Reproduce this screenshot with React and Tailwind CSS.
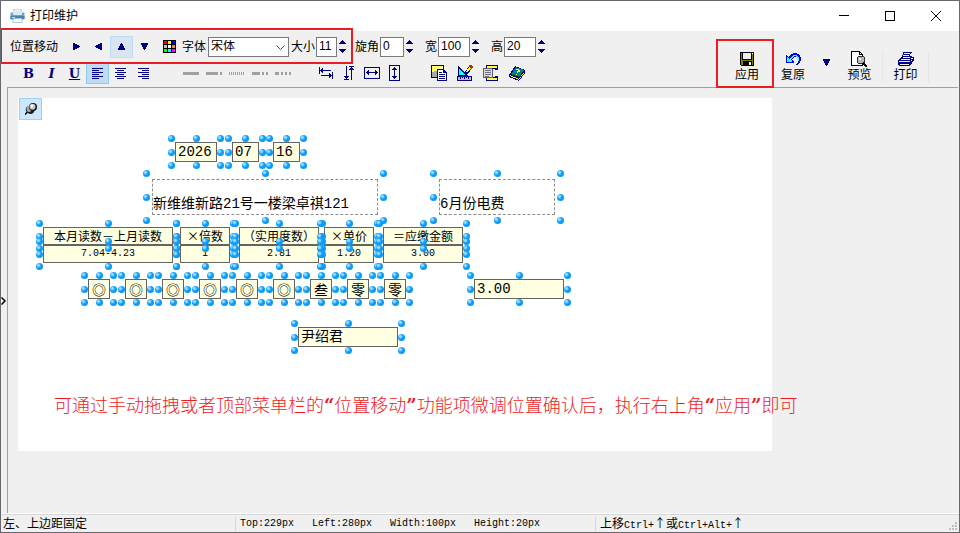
import React from "react";

const CJK = "font-['Liberation_Sans','Noto_Sans_CJK_SC',sans-serif]";

/* ---------- icons ---------- */

function Svg({ w, h, children }) {
  return (
    <svg
      width={w}
      height={h}
      viewBox={`0 0 ${w} ${h}`}
      fill="none"
      shapeRendering="crispEdges"
      aria-hidden="true"
      className="shrink-0"
    >
      {children}
    </svg>
  );
}

const TRI = {
  right: "M1 0H2L8 3V4L2 7H1Z",
  left: "M7 0H6L0 3V4L6 7H7Z",
  up: "M0 7V6L3 0H4L7 6V7Z",
  down: "M0 0V1L3 7H4L7 1V0Z",
};

function Tri({ dir }) {
  return (
    <Svg w={8} h={8}>
      <path d={TRI[dir]} fill="#000080" />
    </Svg>
  );
}

function PrinterColor() {
  return (
    <svg width="15" height="14" viewBox="0 0 15 14" aria-hidden="true">
      <path d="M4 0h7l1 5H3z" fill="#eef6fb" stroke="#9db9c9" strokeWidth=".8" />
      <path d="M0.5 4.5q0-1 1-1h12q1 0 1 1v6h-14z" fill="#6fa3c2" />
      <path d="M3 2h9v4H3z" fill="#d9ecf6" />
      <path d="M0.5 7h14v3h-14z" fill="#4a84a8" />
      <path d="M2 8h3v1H2z" fill="#b6e3f7" />
      <path d="M3.5 9.5h8l1 4h-10z" fill="#f4f9fc" stroke="#a9bcc7" strokeWidth=".8" />
    </svg>
  );
}

function Palette() {
  const colors = ["#f00", "#ff0", "#00f", "#c0c0c0", "#fff", "#ff8040", "#0f0", "#0ff", "#f0f"];
  return (
    <Svg w={13} h={13}>
      <rect width="13" height="13" fill="#000" />
      {colors.map((c, i) => (
        <rect key={c} x={1 + (i % 3) * 4} y={1 + Math.floor(i / 3) * 4} width="3" height="3" fill={c} />
      ))}
    </Svg>
  );
}

function AlignLines({ kind }) {
  const widths = [11, 7, 11, 7, 11, 7];
  return (
    <Svg w={11} h={11}>
      {widths.map((w, i) => {
        const x = kind === "left" ? 0 : kind === "center" ? (11 - w) / 2 : 11 - w;
        return <rect key={i} x={x} y={i * 2} width={w} height="1" fill="#000080" />;
      })}
    </Svg>
  );
}

const DASHES = [
  { name: "实线", parts: [[0, 16]] },
  { name: "长虚线", parts: [[0, 12], [14, 2]] },
  { name: "点线", parts: [[0, 1], [2, 1], [4, 1], [6, 1], [8, 1], [10, 1], [12, 1], [14, 1]] },
  { name: "点划线", parts: [[0, 8], [10, 2], [14, 2]] },
  { name: "双点划线", parts: [[0, 4], [6, 2], [10, 2], [14, 2]] },
];

function Dash({ parts }) {
  return (
    <Svg w={16} h={3}>
      {parts.map(([x, w]) => (
        <rect key={x} x={x} y="0" width={w} height="3" fill="#a0a0a0" />
      ))}
    </Svg>
  );
}

const N = "#000080";

function SpaceH() {
  return (
    <Svg w={14} h={12}>
      <path
        fill={N}
        d="M0 0h1v7H0zM1 3h11v1H1zM2 2h1v3H2zM3 1h1v5H3zM13 5h1v7h-1zM2 8h11v1H2zM11 7h1v3h-1zM10 6h1v5h-1z"
      />
    </Svg>
  );
}
function SpaceV() {
  return (
    <Svg w={10} h={14}>
      <path
        fill={N}
        d="M2 0h1v13H2zM0 13h5v1H0zM0 10h5v1H0zM1 11h3v1H1zM7 1h1v13H7zM5 0h5v1H5zM5 3h5v1H5zM6 2h3v1H6z"
      />
    </Svg>
  );
}
function WidthBox() {
  return (
    <Svg w={16} h={12}>
      <path d="M.5 .5h15v11H.5z" stroke={N} />
      <path fill={N} d="M2 5h12v1H2zM3 4h1v3H3zM4 3h1v5H4zM12 4h1v3h-1zM11 3h1v5h-1z" />
    </Svg>
  );
}
function HeightBox() {
  return (
    <Svg w={11} h={16}>
      <path d="M.5 .5h10v15H.5z" stroke={N} />
      <path fill={N} d="M5 2h1v12H5zM4 3h3v1H4zM3 4h5v1H3zM4 12h3v1H4zM3 11h5v1H3z" />
    </Svg>
  );
}
function PictureCopy() {
  return (
    <Svg w={16} h={16}>
      <path d="M0 0h13v13H0z" fill={N} />
      <path d="M1 1h11v6H1z" fill="#ffff60" />
      <path d="M8 2h3v2H8z" fill="#fff" />
      <path d="M1 7h2V6h3v1h2v5H1z" fill="#a8a8a8" />
      <path d="M6 4h7v1h1v1h1v1h1v9H6z" fill={N} />
      <path d="M7 5h5v3h3v7H7z" fill="#fff" />
      <path d="M8 7h3v1H8zM8 9h6v1H8zM8 11h6v1H8zM8 13h6v1H8z" fill={N} />
    </Svg>
  );
}
function SetSquare() {
  return (
    <Svg w={16} h={16}>
      <path d="M1 0l10 11H1z" fill={N} />
      <path d="M2 3l6 7H2z" fill="#00ffff" />
      <path d="M4 7l2 2H4z" fill="#f0f0f0" />
      <path d="M8 9V7l4-6 3 2-4 6-3 1z" fill={N} />
      <path d="M9 7l3-5 2 1-4 5z" fill="#ffff00" />
      <path d="M12 0h2l2 2v1l-2 1-2-2z" fill="#a03818" />
      <path d="M0 11h15v5H0z" fill={N} />
      <path d="M1 12h13v3H1z" fill="#c0c0c0" />
      <path d="M3 12h1v2H3zM5 12h1v1H5zM7 12h1v2H7zM9 12h1v1H9zM11 12h1v2h-1z" fill={N} />
    </Svg>
  );
}
function Clips() {
  return (
    <Svg w={16} h={16}>
      <path d="M3 0h12v5h-3V4H6v2H3zM3 16h12v-5h-3v1H6v-2H3z" fill={N} />
      <path d="M4 1h10v2H4zM4 13h10v2H4z" fill="#ffff40" />
      <path d="M0 3h9v1h1v9H0z" fill="#606070" />
      <path d="M1 4h8v8H1z" fill="#dcdcdc" />
      <path d="M2 5h6v1H2zM2 7h6v1H2zM2 9h6v1H2zM2 11h4v1H2z" fill="#707080" />
    </Svg>
  );
}
function Book() {
  return (
    <Svg w={16} h={15}>
      <path d="M0 9l6-9 10 4v3l-6 8-10-4z" fill={N} />
      <path d="M2 8l5-7 8 3-5 7z" fill="#008080" />
      <path d="M1 9l9 4 5-7v1l-5 7-9-4z" fill="#ffff00" />
      <path d="M7 3h3v1h1v2H9v1H8V5h1V4H7zM7 8h1v1H7z" fill="#ffff40" />
    </Svg>
  );
}
function Floppy() {
  return (
    <Svg w={14} h={14}>
      <path d="M0 0h14v14H1L0 13z" fill="#000" />
      <path d="M1 1h12v12H1z" fill="#808000" />
      <path d="M2 0h10v8H2z" fill="#000" />
      <path d="M3 1h8v6H3z" fill="#f0f0f0" />
      <path d="M3 9h9v5H3z" fill="#000" />
      <path d="M9 10h2v3H9z" fill="#f0f0f0" />
      <path d="M12 1h1v1h-1z" fill="#fff" />
    </Svg>
  );
}
function Undo() {
  return (
    <Svg w={15} h={12}>
      <path d="M0 2h1v1h1v1h1V3h1V2h1V1h2V0h4v1h2v1h1v2h1v4h-1v2h-1v1h-1v1h-2v-1h1v-1h1V8h1V6h-1V5h-1V4H8v1H7v1H6v1h1v1h1v2H0z" fill="#0000e0" />
      <path d="M1 4h1v1h1v1h1V5h1V4h1V3h1V2h4v1h1v1h1v4h-1V5h-1V4h-1V3H8v1H7v1H6v1H5v1h1v2H1z" fill="#40f0ff" />
    </Svg>
  );
}
function Preview() {
  return (
    <Svg w={17} h={16}>
      <path d="M.5 .5h8l3 3v11H.5z" fill="#fff" stroke="#000" />
      <path d="M8.500 .5v3h3" stroke="#000" />
      <circle cx="10" cy="9" r="4" fill="#b8b8b8" stroke="#303030" />
      <path d="M8 7h2v2H8z" fill="#e8e8e8" />
      <path d="M12 12l4 4" stroke="#000" strokeWidth="2" />
    </Svg>
  );
}
function PrinterLine() {
  return (
    <Svg w={16} h={14}>
      <path
        fill={N}
        d="M5 0h9v1h-1v1h-1v2h2v1h2v4h-1v1h-1v2h-1v1h-1v1H1v-1H0V8h1V7h1V6h1V5h1V3h1z"
      />
      <path
        fill="#f0f0f0"
        d="M6 1h6v1H6zM5 3h6v1H5zM5 5h7v1H4zM3 7h9v1H3zM1 9h11v1H1zM2 12h9v1H2zM13 6h2v1h-2zM13 8h1v1h-1z"
      />
    </Svg>
  );
}
function Pin() {
  return (
    <svg width="12" height="12" viewBox="0 0 12 12" aria-hidden="true">
      <path d="M0 11.500l3-3" stroke="#000" strokeWidth="1.500" />
      <ellipse cx="5" cy="7" rx="4.500" ry="3.800" fill="#202020" transform="rotate(35 5 7)" />
      <ellipse cx="4" cy="6" rx="2.500" ry="3" fill="#a8a8a8" />
      <circle cx="8" cy="4" r="4" fill="#111" />
      <circle cx="7.500" cy="3.700" r="3" fill="#c8c8c8" />
      <circle cx="7" cy="3" r="1.500" fill="#fff" />
    </svg>
  );
}

/* ---------- toolbar parts ---------- */

function Tool({ label, active, hover, wide, children }) {
  const state = active
    ? "border-[#90c8f6] bg-[#c0dcf3]"
    : hover
      ? "border-[#c0dcf3] bg-[#d8e6f1]"
      : "border-transparent";
  return (
    <button
      type="button"
      aria-label={label}
      title={label}
      className={`flex h-[22px] shrink-0 items-center justify-center border ${wide ? "w-[26px]" : "w-[23px]"} ${state}`}
    >
      {children}
    </button>
  );
}

function NumberField({ id, label, value, width }) {
  return (
    <div className="flex shrink-0 items-center">
      <label htmlFor={id} className="pr-px">{label}</label>
      <input
        id={id}
        defaultValue={value}
        className={`h-5 border border-[#7a7a7a] bg-white pb-px pl-0.5 text-xs leading-none outline-none ${width}`}
      />
      <div className="ml-0.5 flex flex-col gap-1">
        <button type="button" aria-label={`${label}加`} className="block">
          <Svg w={8} h={5}>
            <path d="M0 4h7L4 0H3z" fill={N} />
          </Svg>
        </button>
        <button type="button" aria-label={`${label}减`} className="block">
          <Svg w={8} h={5}>
            <path d="M0 0h7L4 4H3z" fill={N} />
          </Svg>
        </button>
      </div>
    </div>
  );
}

function BigTool({ label, icon, divided, marked }) {
  return (
    <button
      type="button"
      className={`relative flex h-8 w-[46px] flex-col items-center justify-between ${divided ? "border-r border-[#e6e6e6]" : ""}`}
    >
      <span className="flex h-4 items-center">{icon}</span>
      <span className="leading-4">{label}</span>
      {marked && <span className="pointer-events-none absolute -top-3 -right-1 -bottom-[5px] -left-2 border-2 border-[#ed1c24]" />}
    </button>
  );
}

/* ---------- design surface ---------- */

const DIGITS = [
  [70, "◎"], [107, "◎"], [144, "◎"], [181, "◎"], [218, "◎"],
  [255, "◎"], [292, "叁"], [329, "零"], [366, "零"],
];

const ITEMS = [
  { x: 157, y: 44, w: 42, h: 20, text: "2026" },
  { x: 214, y: 44, w: 27, h: 20, text: "07" },
  { x: 255, y: 44, w: 27, h: 20, text: "16" },
  { x: 134, y: 81, w: 226, h: 36, text: "新维维新路21号一楼梁卓祺121", kind: "frame" },
  { x: 421, y: 81, w: 116, h: 36, text: "6月份电费", kind: "frame" },
  { x: 25, y: 129, w: 130, h: 18, text: "本月读数－上月读数", kind: "head" },
  { x: 162, y: 129, w: 50, h: 18, text: "×倍数", kind: "head" },
  { x: 221, y: 129, w: 80, h: 18, text: "（实用度数）", kind: "head" },
  { x: 306, y: 129, w: 50, h: 18, text: "×单价", kind: "head" },
  { x: 365, y: 129, w: 80, h: 18, text: "＝应缴金额", kind: "head" },
  { x: 25, y: 147, w: 130, h: 18, text: "7.04-4.23", kind: "value" },
  { x: 162, y: 147, w: 50, h: 18, text: "1", kind: "value" },
  { x: 221, y: 147, w: 80, h: 18, text: "2.81", kind: "value" },
  { x: 306, y: 147, w: 50, h: 18, text: "1.20", kind: "value" },
  { x: 365, y: 147, w: 80, h: 18, text: "3.00", kind: "value" },
  ...DIGITS.map(([x, text]) => ({ x, y: 181, w: 22, h: 20, text, kind: "digit" })),
  { x: 456, y: 181, w: 90, h: 20, text: "3.00" },
  { x: 280, y: 229, w: 100, h: 20, text: "尹绍君" },
];

const MONO = "font-['Liberation_Mono','Noto_Sans_CJK_SC',monospace]";
const WIDE = "font-['Noto_Sans_CJK_SC',sans-serif]";

const KIND = {
  field: `items-center border border-[#646464] bg-[#ffffe1] pl-0.5 text-sm ${MONO}`,
  frame: `items-end border border-dashed border-[#8c8c8c] pb-0.5 text-sm ${MONO}`,
  head: `items-center justify-center border border-[#646464] bg-[#ffffe1] text-xs ${WIDE}`,
  value: `items-center justify-center border border-[#646464] bg-[#ffffe1] text-[10px] ${MONO}`,
  digit: `items-center justify-center border border-[#646464] bg-[#ffffe1] text-sm ${WIDE}`,
};

function place(item) {
  return { left: item.x, top: item.y, width: item.w, height: item.h };
}

function Item({ item }) {
  return (
    <div className={`absolute flex leading-4 whitespace-nowrap ${KIND[item.kind || "field"]}`} style={place(item)}>
      {item.text}
    </div>
  );
}

function Handles({ item }) {
  return (
    <div className="pointer-events-none absolute" style={place(item)}>
      <div
        className={`absolute grid grid-cols-[repeat(3,7px)] content-between justify-between ${item.kind === "frame" ? "-inset-[9px]" : "-inset-[7px]"}`}
      >
        {[0, 1, 2, 3, 4, 5, 6, 7, 8].map((i) => (
          <span
            key={i}
            className={`size-[7px] rounded-full ${i === 4 ? "" : "bg-[radial-gradient(circle_at_35%_35%,#9fdcff_0,#9fdcff_12%,#0a9cf8_40%,#0a98f4_100%)]"}`}
          />
        ))}
      </div>
    </div>
  );
}

/* ---------- window ---------- */

export default function App() {
  return (
    <div className={`flex h-screen flex-col overflow-hidden border border-[#68666e] bg-[#f0f0f0] text-xs text-black ${CJK}`}>
      <header className="flex h-[30px] shrink-0 items-center justify-between bg-white">
        <div className="flex items-center gap-[5px] pl-[9px]">
          <PrinterColor />
          <h1>打印维护</h1>
        </div>
        <div className="flex h-full">
          <button type="button" aria-label="最小化" className="flex w-[46px] items-center justify-center">
            <Svg w={10} h={10}><path d="M0 4.500h10" stroke="#000" /></Svg>
          </button>
          <button type="button" aria-label="最大化" className="flex w-[46px] items-center justify-center">
            <Svg w={10} h={10}><path d="M.5 .5h9v9h-9z" stroke="#000" /></Svg>
          </button>
          <button type="button" aria-label="关闭" className="flex w-[46px] items-center justify-center">
            <svg width="10" height="10" viewBox="0 0 10 10" aria-hidden="true">
              <path d="M0 0l10 10M10 0L0 10" stroke="#000" />
            </svg>
          </button>
        </div>
      </header>

      <div className="flex h-14 shrink-0 justify-between">
        <div className="flex flex-col">
          <div className="flex h-[31px] items-center">
            <div className="relative z-10 flex h-full items-center pr-1.5 pl-[9px]">
              <span className="pr-1.5">位置移动</span>
              <Tool label="右移"><Tri dir="right" /></Tool>
              <Tool label="左移"><Tri dir="left" /></Tool>
              <Tool label="上移" hover><Tri dir="up" /></Tool>
              <Tool label="下移"><Tri dir="down" /></Tool>
              <button type="button" aria-label="颜色" className="mr-1.5 ml-[7px]"><Palette /></button>
              <label htmlFor="font" className="pr-0.5">字体</label>
              <span className="relative mr-0.5 flex">
                <select
                  id="font"
                  defaultValue="宋体"
                  className="h-5 w-[81px] appearance-none border border-[#7a7a7a] bg-white pb-px pl-0.5 text-xs leading-none outline-none"
                >
                  <option>宋体</option>
                </select>
                <svg width="9" height="6" viewBox="0 0 9 6" fill="none" className="pointer-events-none absolute top-2 right-1" aria-hidden="true">
                  <path d="M.5 .5l4 4 4-4" stroke="#505050" />
                </svg>
              </span>
              <NumberField id="size" label="大小" value="11" width="w-[21px]" />
              <span className="pointer-events-none absolute -top-[3px] right-0 -bottom-0.5 -left-px border-2 border-[#ed1c24]" />
            </div>
            <div className="flex items-center gap-[11px] pl-0.5">
              <NumberField id="angle" label="旋角" value="0" width="w-6" />
              <NumberField id="width" label="宽" value="100" width="w-8" />
              <NumberField id="height" label="高" value="20" width="w-8" />
            </div>
          </div>
          <div className="flex h-[22px] items-center pl-4">
            <div className="flex font-['DejaVu_Serif',serif] text-[13px] leading-none font-bold text-[#000080]">
              <Tool label="粗体">B</Tool>
              <Tool label="斜体"><i>I</i></Tool>
              <Tool label="下划线"><u>U</u></Tool>
              <Tool label="左对齐" active><AlignLines kind="left" /></Tool>
              <Tool label="居中"><AlignLines kind="center" /></Tool>
              <Tool label="右对齐"><AlignLines kind="right" /></Tool>
            </div>
            <div className="ml-6 flex">
              {DASHES.map((d) => (
                <Tool key={d.name} label={d.name}><Dash parts={d.parts} /></Tool>
              ))}
            </div>
            <div className="ml-5 flex">
              <Tool label="水平间距"><SpaceH /></Tool>
              <Tool label="垂直间距"><SpaceV /></Tool>
              <Tool label="等宽"><WidthBox /></Tool>
              <Tool label="等高"><HeightBox /></Tool>
            </div>
            <div className="ml-5 flex">
              <Tool label="图片" wide><PictureCopy /></Tool>
              <Tool label="设计" wide><SetSquare /></Tool>
              <Tool label="页面" wide><Clips /></Tool>
              <Tool label="帮助" wide><Book /></Tool>
            </div>
          </div>
        </div>
        <div className="z-10 flex items-start pt-5 pr-[30px]">
          <BigTool label="应用" icon={<Floppy />} marked />
          <BigTool label="复原" icon={<Undo />} />
          <button type="button" aria-label="更多" className="flex h-6 w-[21px] items-center justify-center">
            <Tri dir="down" />
          </button>
          <BigTool label="预览" icon={<Preview />} divided />
          <BigTool label="打印" icon={<PrinterLine />} divided />
        </div>
      </div>

      <main className="flex min-h-0 flex-1">
        <button type="button" aria-label="展开" className="flex w-1.5 shrink-0 items-center">
          <svg width="5" height="8" viewBox="0 0 5 8" fill="none" aria-hidden="true">
            <path d="M.5 .5L4 4 .5 7.500" stroke="#000" strokeWidth="1.500" />
          </svg>
        </button>
        <div className="mr-px min-w-0 flex-1 border-t border-l border-[#a0a0a0] pt-2.5 pl-2.5">
          <div className="relative h-[353px] w-[754px] bg-white">
            <button
              type="button"
              aria-label="固定"
              className="ml-px flex h-[22px] w-[23px] items-center justify-center border border-[#99d1ff] bg-[#cce8ff]"
            >
              <Pin />
            </button>
            {ITEMS.map((item) => (
              <Item key={`${item.x}-${item.y}`} item={item} />
            ))}
            {ITEMS.map((item) => (
              <Handles key={`${item.x}-${item.y}`} item={item} />
            ))}
            <p className="absolute top-[294px] left-9 font-['DejaVu_Serif','Noto_Sans_CJK_SC',serif] text-lg leading-7 font-light whitespace-nowrap text-[#ed1c24]">
              可通过手动拖拽或者顶部菜单栏的<b className="font-bold">“</b>位置移动<b className="font-bold">”</b>功能项微调位置确认后，执行右上角<b className="font-bold">“</b>应用<b className="font-bold">”</b>即可
            </p>
          </div>
        </div>
      </main>

      <footer className="flex h-[18px] shrink-0 items-center border-t border-[#d7d7d7] shadow-[0_-1px_0_#ffffff]">
        <span className="w-[234px] pl-0.5">左、上边距固定</span>
        <div className={`flex h-[14px] w-[360px] items-center gap-[18px] border-l border-[#d7d7d7] pl-1 text-[10px] ${MONO}`}>
          <span>Top:229px</span>
          <span>Left:280px</span>
          <span>Width:100px</span>
          <span>Height:20px</span>
        </div>
        <div className={`flex h-[14px] flex-1 items-center border-l border-[#d7d7d7] pl-1 text-xs ${WIDE}`}>
          <span>
            上移<span className={`text-[10px] ${MONO}`}>Ctrl+</span>↑或<span className={`text-[10px] ${MONO}`}>Ctrl+Alt+</span>↑
          </span>
        </div>
        <div className="self-end pr-0.5 pb-0.5">
          <Svg w={8} h={8}>
            <path d="M6 0h2v2H6zM3 3h2v2H3zM6 3h2v2H6zM0 6h2v2H0zM3 6h2v2H3zM6 6h2v2H6z" fill="#bfbfbf" />
          </Svg>
        </div>
      </footer>
    </div>
  );
}
